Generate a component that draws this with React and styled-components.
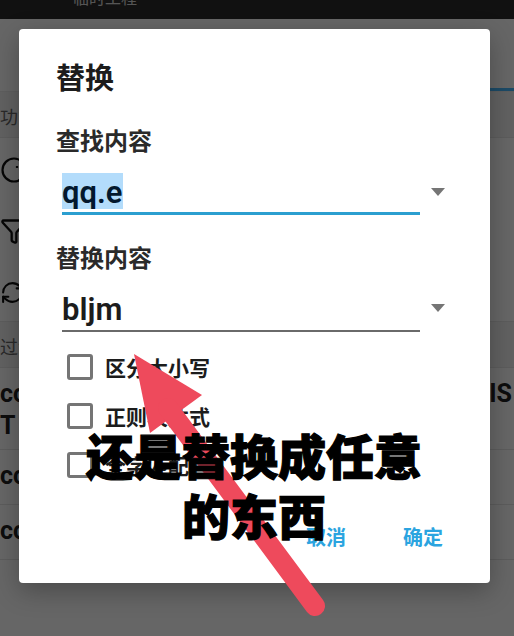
import React from 'react';
import styled, { createGlobalStyle } from 'styled-components';
import { Filter, RefreshCw } from 'lucide-react';

const CJK = `Roboto, 'Noto Sans CJK SC', sans-serif`;

const GlobalStyle = createGlobalStyle`
  html, body {
    margin: 0;
    padding: 0;
    background: #fff;
  }
  * {
    box-sizing: border-box;
  }
`;

const Screen = styled.div`
  position: relative;
  width: 514px;
  height: 636px;
  overflow: hidden;
  background: #fff;
  font-family: ${CJK};
`;

const Header = styled.header`
  height: 19px;
  background: #2b2b2b;
  padding-left: 73px;
  color: #fff;
  font-size: 16px;
  line-height: 16px;
  overflow: hidden;

  span {
    display: block;
    margin-top: -9px;
    opacity: 0.8;
  }
`;

const TabStrip = styled.div`
  height: 73px;
  display: flex;
  align-items: flex-end;
  justify-content: flex-end;
  border-bottom: 1px solid #ececec;
`;

const TabIndicator = styled.div`
  width: 180px;
  height: 3px;
  background: #48b9ff;
`;

const SectionHeader = styled.div`
  height: 46px;
  display: flex;
  align-items: center;
  padding-top: 2px;
  background: #f2f2f2;
  border-bottom: 1px solid #e6e6e6;
  color: #666;
  font-size: 18px;
`;

const ToolRow = styled.div`
  height: 61px;
  display: flex;
  align-items: center;
  padding-top: 3px;
  color: #111;
`;

const ToolList = styled.div`
  height: 184px;
  border-bottom: 1px solid #e6e6e6;
`;

const ResultRow = styled.div`
  height: ${(p) => (p.$tall ? 82 : 55)}px;
  border-bottom: 1px solid #e6e6e6;
  padding: 10px 2px 0 0;
  color: #222;
  font-size: 25px;
  font-weight: 700;
  line-height: 32px;
`;

const ResultLine = styled.div`
  display: flex;
  justify-content: space-between;
`;

const Scrim = styled.div`
  position: absolute;
  inset: 0;
  padding: 29px 24px 53px 19px;
  background: rgba(0, 0, 0, 0.6);
`;

const Dialog = styled.section`
  height: 100%;
  display: flex;
  flex-direction: column;
  padding: 32px 47px 0 37px;
  background: #fff;
  border-radius: 4px;
  box-shadow: 0 8px 26px rgba(0, 0, 0, 0.28);
`;

const Title = styled.h2`
  margin: 0;
  color: #1c1c1c;
  font-size: 29px;
  font-weight: 700;
  line-height: 36px;
`;

const FieldLabel = styled.div`
  margin-top: ${(p) => p.$top}px;
  color: #2a2a2a;
  font-size: 24px;
  font-weight: 700;
  line-height: 30px;
`;

const FieldRow = styled.div`
  display: flex;
  align-items: center;
  margin-top: 14px;
  padding-left: 6px;
`;

const Field = styled.div`
  flex: none;
  width: 358px;
  height: 44px;
  border-bottom: ${(p) => (p.$focused ? '3px solid #2b9fd0' : '2px solid #6a6a6a')};
  color: #1c1c1c;
  font-size: 31px;
  font-weight: 600;
  line-height: 36px;
  padding-top: 2px;
`;

const Selected = styled.span`
  display: inline-block;
  background: #b3dcfb;
  color: #03182d;
`;

const FieldText = styled.span`
  position: relative;
  top: 2px;
`;

const DropArrow = styled.div`
  flex: none;
  width: 0;
  height: 0;
  margin: ${(p) => p.$drop}px 0 0 11px;
  border-left: 7.5px solid transparent;
  border-right: 7.5px solid transparent;
  border-top: 8px solid #757575;
`;

const OptionList = styled.div`
  display: flex;
  flex-direction: column;
  gap: 23px;
  margin-top: 22px;
  padding-left: 11px;
`;

const Option = styled.label`
  display: flex;
  align-items: center;
  gap: 12px;
  height: 26px;
  color: #1c1c1c;
  font-size: 21px;
  font-weight: 700;
`;

const CheckBox = styled.span`
  flex: none;
  width: 26px;
  height: 26px;
  border: 3px solid #757575;
  border-radius: 3px;
`;

const Actions = styled.div`
  display: flex;
  justify-content: flex-end;
  gap: 57px;
  margin-top: 47px;
`;

const ActionButton = styled.button`
  padding: 0;
  border: 0;
  background: none;
  color: #2ba4e0;
  font-family: inherit;
  font-size: 20px;
  font-weight: 700;
  line-height: 26px;
`;

const ArrowMark = styled.svg`
  position: absolute;
  inset: 0;
  pointer-events: none;
`;

const Caption = styled.div`
  position: absolute;
  left: 0;
  right: 6px;
  top: 424px;
  text-align: center;
  color: #000;
  font-family: 'Noto Sans CJK SC', sans-serif;
  font-size: 48px;
  font-weight: 900;
  line-height: 60px;
  -webkit-text-stroke: 1.2px #000;
`;

const DialIcon = () => (
  <svg width="28" height="28" viewBox="0 0 28 28" fill="none" stroke="currentColor" strokeWidth="2.2">
    <circle cx="14" cy="14" r="11.5" />
    <line x1="17" y1="10" x2="17" y2="12" />
  </svg>
);

const App = () => (
  <>
    <GlobalStyle />
    <Screen>
      <Header>
        <span>临时工程</span>
      </Header>
      <TabStrip>
        <TabIndicator />
      </TabStrip>
      <SectionHeader>功能</SectionHeader>
      <ToolList>
        <ToolRow>
          <DialIcon />
        </ToolRow>
        <ToolRow>
          <Filter size={28} strokeWidth={2} />
        </ToolRow>
        <ToolRow>
          <RefreshCw size={25} strokeWidth={2} />
        </ToolRow>
      </ToolList>
      <SectionHeader>过滤</SectionHeader>
      <ResultRow $tall>
        <ResultLine>
          <span>cc</span>
          <span>IS</span>
        </ResultLine>
        <ResultLine>
          <span>T</span>
        </ResultLine>
      </ResultRow>
      <ResultRow>cc</ResultRow>
      <ResultRow>cc</ResultRow>

      <Scrim>
        <Dialog>
          <Title>替换</Title>
          <FieldLabel $top={30}>查找内容</FieldLabel>
          <FieldRow>
            <Field $focused>
              <Selected>
                <FieldText>qq.e</FieldText>
              </Selected>
            </Field>
            <DropArrow $drop={-2} />
          </FieldRow>
          <FieldLabel $top={29}>替换内容</FieldLabel>
          <FieldRow>
            <Field>
              <FieldText>bljm</FieldText>
            </Field>
            <DropArrow $drop={-5} />
          </FieldRow>
          <OptionList>
            <Option>
              <CheckBox />
              区分大小写
            </Option>
            <Option>
              <CheckBox />
              正则表达式
            </Option>
            <Option>
              <CheckBox />
              全字匹配
            </Option>
          </OptionList>
          <Actions>
            <ActionButton>取消</ActionButton>
            <ActionButton>确定</ActionButton>
          </Actions>
        </Dialog>
      </Scrim>

      <ArrowMark width="514" height="636" viewBox="0 0 514 636">
        <polygon points="134,354 202,395 150,433" fill="#ee4a5c" />
        <line x1="168" y1="408" x2="315" y2="606" stroke="#ee4a5c" strokeWidth="20" strokeLinecap="round" />
      </ArrowMark>
      <Caption>
        还是替换成任意
        <br />
        的东西
      </Caption>
    </Screen>
  </>
);

export default App;
